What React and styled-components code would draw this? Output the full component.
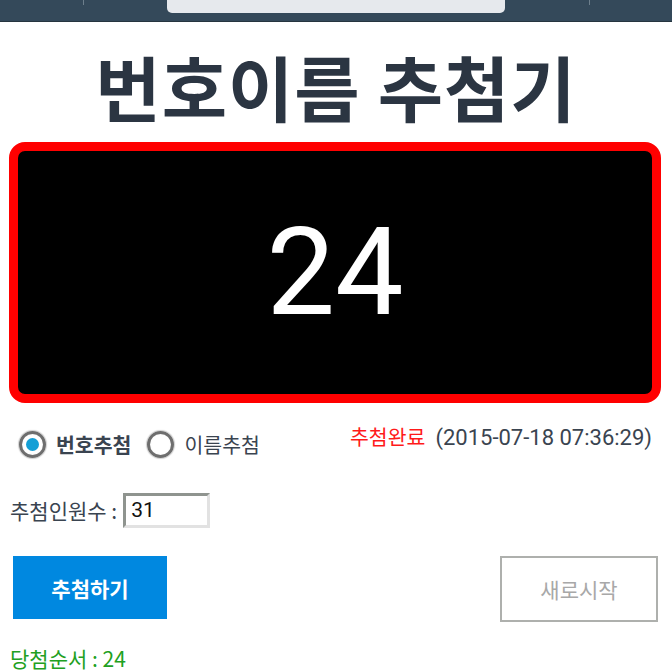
import React from "react";
import styled, { createGlobalStyle } from "styled-components";

const Global = createGlobalStyle`
  html, body { margin: 0; padding: 0; background: #fff; }
  body { font-family: Roboto, "Noto Sans CJK KR", sans-serif; }
`;

const TopBar = styled.div`
  height: 21px;
  background: #34495a;
  border-bottom: 1px solid #26353f;
  position: relative;
  display: flex;
  justify-content: center;
`;

const UrlPill = styled.div`
  width: 338px;
  height: 13px;
  background: #e6e9ed;
  border-radius: 0 0 5px 5px;
`;

const Tick = styled.span`
  position: absolute;
  top: 0;
  left: ${(p) => p.$x}px;
  width: 1px;
  height: 5px;
  background: #6d7f8c;
`;

const Title = styled.h1`
  margin: 0;
  padding-top: 20px;
  height: 100px;
  text-align: center;
  font-family: "Noto Sans CJK KR", sans-serif;
  font-weight: 700;
  font-size: 71px;
  line-height: 86px;
  color: #2b3542;
  letter-spacing: 1px;
`;

const Display = styled.div`
  margin: 0 11px 0 9px;
  height: 243px;
  border: 9px solid #ff0000;
  border-radius: 16px;
  background: #000;
  display: flex;
  align-items: center;
  justify-content: center;
  color: #fff;
  font-family: Roboto, sans-serif;
  font-weight: 400;
  font-size: 122px;
`;

const OptionsRow = styled.div`
  display: flex;
  align-items: center;
  justify-content: space-between;
  padding: 18px 20px 0 19px;
  height: 38px;
`;

const RadioGroup = styled.div`
  display: flex;
  align-items: center;
  margin-top: 8px;
`;

const RadioLabel = styled.label`
  display: flex;
  align-items: center;
  gap: 10px;
  margin-right: 16px;
  font-family: "Noto Sans CJK KR", sans-serif;
  font-size: 20.5px;
  font-weight: ${(p) => (p.$checked ? 700 : 400)};
  color: #3a4450;
`;

const RadioCircle = styled.span`
  width: 21px;
  height: 21px;
  border-radius: 50%;
  border: 3px solid #6e6e6e;
  background: radial-gradient(circle, #fff 60%, #e8e8e8 100%);
  box-shadow: 0 0 1px 1px #cfcfcf;
  display: flex;
  align-items: center;
  justify-content: center;
  &::after {
    content: "";
    width: 13px;
    height: 13px;
    border-radius: 50%;
    background: ${(p) => (p.$checked ? "#149fd6" : "transparent")};
  }
`;

const Status = styled.div`
  font-size: 22px;
  color: #3a4450;
  font-family: Roboto, "Noto Sans CJK KR", sans-serif;
  margin-top: -8px;
`;

const Done = styled.span`
  color: #ff1a1a;
  font-family: "Noto Sans CJK KR", sans-serif;
  font-size: 20.5px;
  margin-right: 10px;
`;

const CountRow = styled.div`
  display: flex;
  align-items: center;
  gap: 6px;
  padding: 33px 0 0 10px;
  height: 36px;
  font-family: "Noto Sans CJK KR", sans-serif;
  font-size: 21px;
  color: #3a4450;
`;

const CountInput = styled.div`
  width: 76px;
  height: 29px;
  border: 3px solid;
  border-color: #8f948f #e2e2e2 #e2e2e2 #8f948f;
  font-family: Roboto, sans-serif;
  font-size: 21px;
  color: #111;
  line-height: 29px;
  padding-left: 5px;
`;

const ButtonRow = styled.div`
  display: flex;
  justify-content: space-between;
  align-items: flex-start;
  padding: 28px 14px 0 13px;
`;

const Button = styled.div`
  width: ${(p) => (p.$primary ? 154 : 154)}px;
  height: ${(p) => (p.$primary ? 63 : 62)}px;
  display: flex;
  align-items: center;
  justify-content: center;
  font-family: "Noto Sans CJK KR", sans-serif;
  font-size: 21px;
  font-weight: ${(p) => (p.$primary ? 700 : 400)};
  background: ${(p) => (p.$primary ? "#0088e0" : "#fff")};
  color: ${(p) => (p.$primary ? "#fff" : "#a8a8a8")};
  border: ${(p) => (p.$primary ? "none" : "2px solid #aeb0ad")};
`;

const Result = styled.div`
  padding: 21px 0 0 10px;
  font-family: "Noto Sans CJK KR", sans-serif;
  font-size: 21px;
  color: #21a021;
`;

export default function App() {
  return (
    <>
      <Global />
      <TopBar>
        <Tick $x={83} />
        <UrlPill />
        <Tick $x={589} />
      </TopBar>
      <Title>번호이름 추첨기</Title>
      <Display>24</Display>
      <OptionsRow>
        <RadioGroup>
          <RadioLabel $checked>
            <RadioCircle $checked />
            번호추첨
          </RadioLabel>
          <RadioLabel>
            <RadioCircle />
            이름추첨
          </RadioLabel>
        </RadioGroup>
        <Status>
          <Done>추첨완료</Done>(2015-07-18 07:36:29)
        </Status>
      </OptionsRow>
      <CountRow>
        추첨인원수 :<CountInput>31</CountInput>
      </CountRow>
      <ButtonRow>
        <Button $primary>추첨하기</Button>
        <Button>새로시작</Button>
      </ButtonRow>
      <Result>당첨순서 : 24</Result>
    </>
  );
}
